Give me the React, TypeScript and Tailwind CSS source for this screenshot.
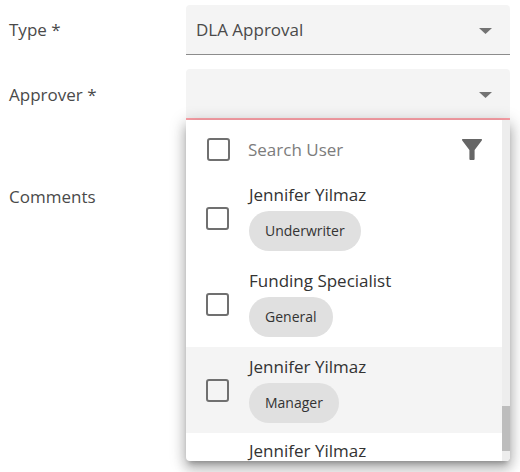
import React, { useState } from "react";

interface User {
  id: number;
  name: string;
  role: string;
}

const users: User[] = [
  { id: 1, name: "Jennifer Yilmaz", role: "Underwriter" },
  { id: 2, name: "Funding Specialist", role: "General" },
  { id: 3, name: "Jennifer Yilmaz", role: "Manager" },
];

const checkboxClass =
  "h-[23px] w-[23px] shrink-0 appearance-none rounded-[3px] border-2 border-[#707070] bg-transparent checked:bg-[#707070]";

const Caret: React.FC = () => (
  <svg
    className="pointer-events-none absolute top-[23px] right-[18px] h-[6px] w-[13px]"
    viewBox="0 0 13 6"
    fill="#737373"
  >
    <path d="M0 0h13L6.5 6z" />
  </svg>
);

const UserRow: React.FC<{ user: User; active: boolean }> = ({ user, active }) => {
  const id = `user-${user.id}`;
  return (
    <li
      className={
        active
          ? "flex h-[86px] items-center gap-5 bg-[#f4f4f4] pl-5"
          : "flex h-[86px] items-center gap-5 pl-5"
      }
    >
      <input id={id} type="checkbox" className={checkboxClass} />
      <label htmlFor={id} className="flex flex-col items-start gap-1 pb-0.5">
        <span className="text-[17px] leading-6 text-[#333]">{user.name}</span>
        <span className="flex h-10 items-center rounded-full bg-[#e0e0e0] px-4 text-[14px] text-[#333]">
          {user.role}
        </span>
      </label>
    </li>
  );
};

export default function App() {
  const [search, setSearch] = useState<string>("");
  return (
    <form className="grid min-h-screen grid-cols-[177px_1fr] content-start gap-y-[14px] bg-white pt-[5px] pr-[10px] pl-[9px] font-['Open_Sans',sans-serif] text-[17px] leading-6 text-[#4a4a4a]">
      <label htmlFor="type" className="self-center">
        Type *
      </label>
      <div className="relative">
        <select
          id="type"
          className="block h-[50px] w-full appearance-none rounded-t border-b border-[#8c8c8c] bg-[#f4f4f4] px-[10px] outline-none"
        >
          <option>DLA Approval</option>
        </select>
        <Caret />
      </div>

      <label htmlFor="approver" className="self-center">
        Approver *
      </label>
      <div className="relative z-10">
        <select
          id="approver"
          className="block h-[51px] w-full appearance-none rounded-t border-b-2 border-[#ffa3aa] bg-[#f4f4f4] px-[10px] outline-none"
        >
          <option></option>
        </select>
        <Caret />
        <div className="absolute top-full right-0 left-0 flex h-[341px] overflow-hidden rounded-b bg-white shadow-[0_5px_5px_-3px_rgba(0,0,0,0.24),0_8px_12px_1px_rgba(0,0,0,0.18),0_3px_16px_2px_rgba(0,0,0,0.18)]">
          <div className="min-w-0 flex-1">
            <div className="flex h-[55px] items-center gap-[18px] pt-1 pr-5 pl-[21px]">
              <input type="checkbox" aria-label="Select all" className={checkboxClass} />
              <input
                type="text"
                aria-label="Search User"
                placeholder="Search User"
                value={search}
                onChange={(e) => setSearch(e.target.value)}
                className="min-w-0 flex-1 outline-none placeholder:text-[#7c7c7c]"
              />
              <button type="button" aria-label="Filter">
                <svg className="h-[21px] w-5" viewBox="0 0 20 21" fill="#666">
                  <path d="M.6 0h18.8c.6 0 .8.8.4 1.4L12.6 11V20c0 .6-.3 1-.9 1H8.3c-.6 0-.9-.4-.9-1v-9L.2 1.4C-.2.8 0 0 .6 0z" />
                </svg>
              </button>
            </div>
            <ul>
              {users.map((user) => (
                <UserRow key={user.id} user={user} active={user.id === 3} />
              ))}
              <li className="flex h-7 items-center pt-2 pl-[63px] text-[#333]">Jennifer Yilmaz</li>
            </ul>
          </div>
          <div className="flex w-2 flex-col justify-end bg-[#ededed] pb-[10px]">
            <div className="h-[45px] bg-[#bdbdbd]" />
          </div>
        </div>
      </div>

      <label htmlFor="comments" className="pt-[51px]">
        Comments
      </label>
      <textarea id="comments" className="mt-[51px] h-24 resize-none outline-none" />
    </form>
  );
}
